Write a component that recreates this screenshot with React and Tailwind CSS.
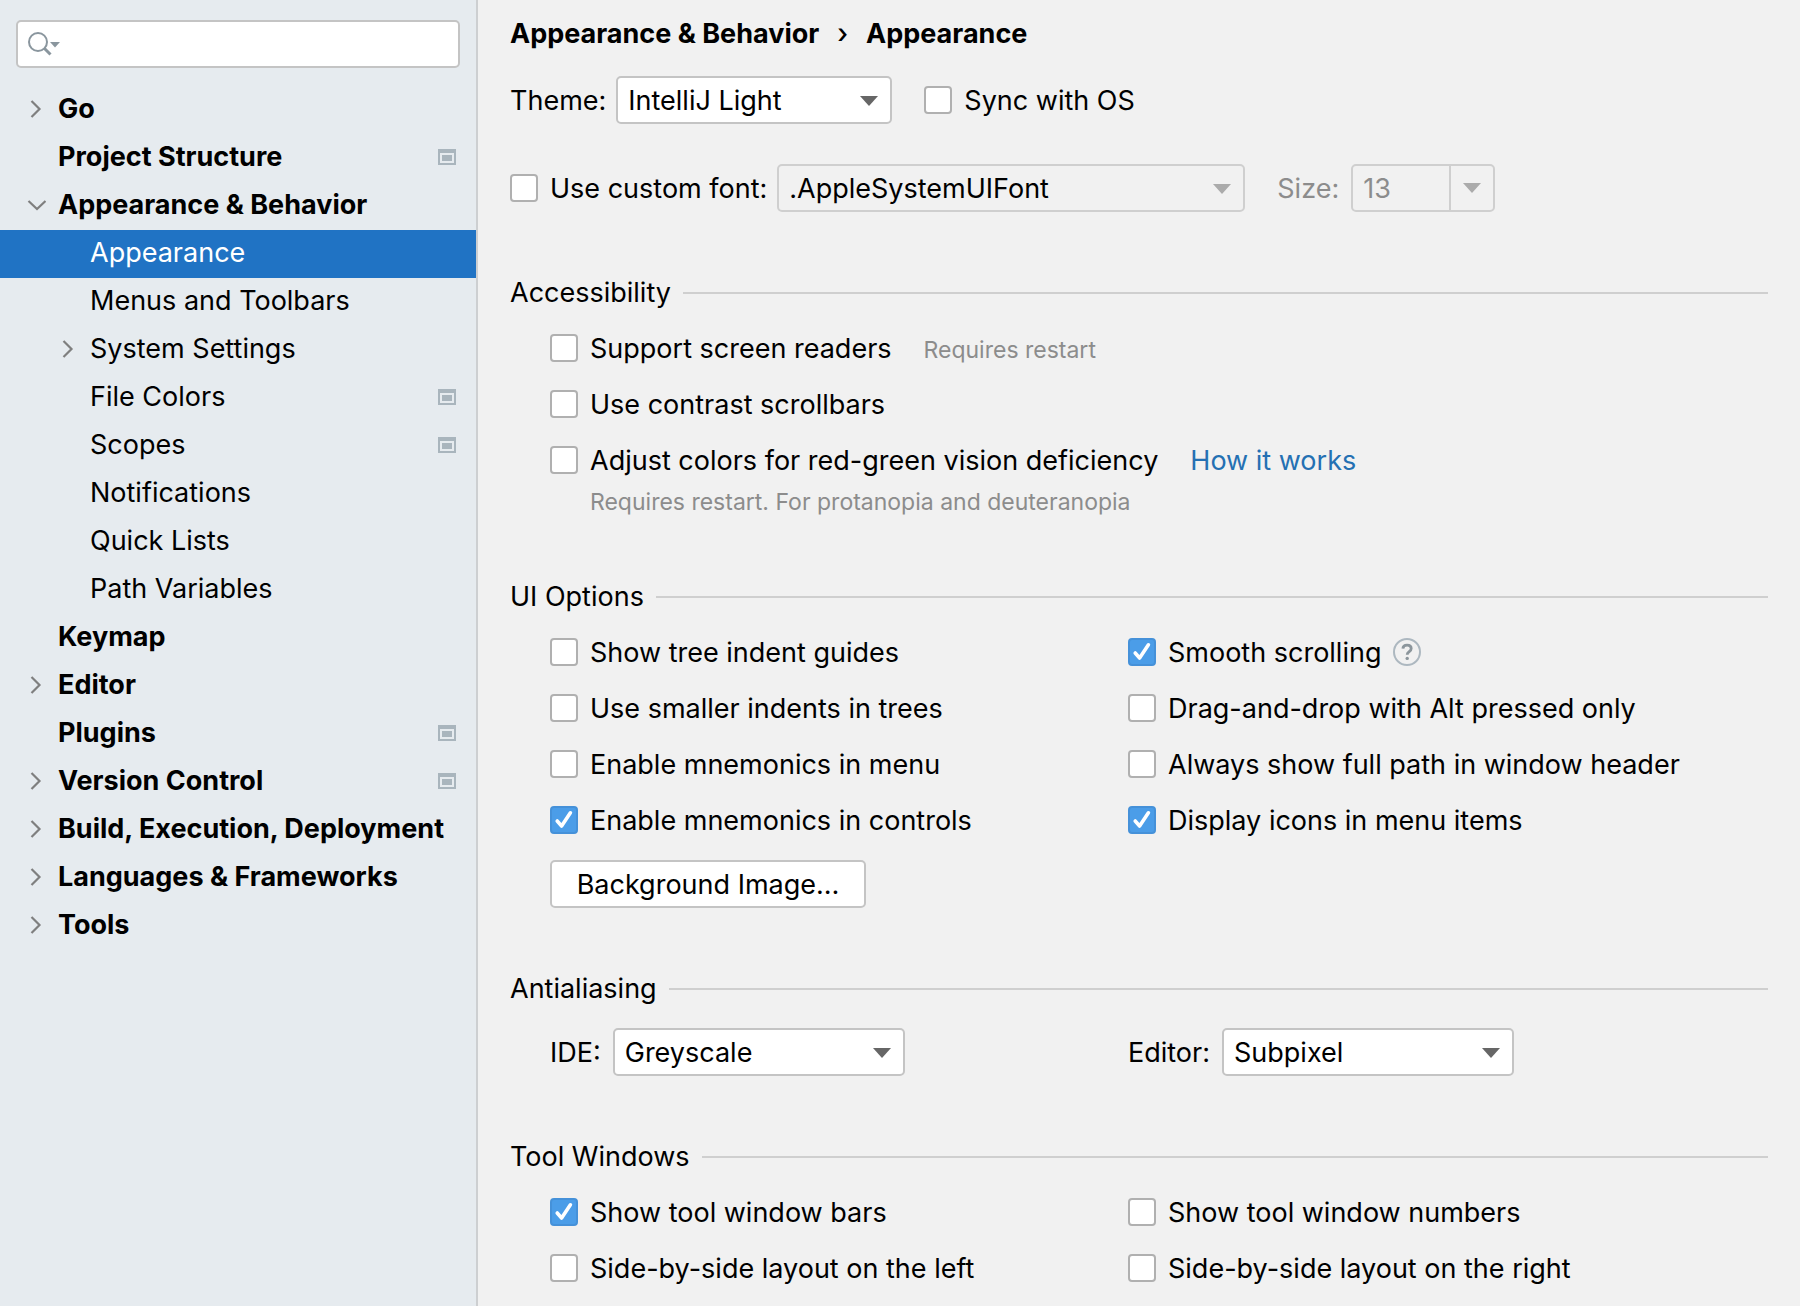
import { useState } from "react";

const TREE = [
  { label: "Go", chevron: "right" },
  { label: "Project Structure", project: true },
  { label: "Appearance & Behavior", chevron: "down" },
  { label: "Appearance", child: true },
  { label: "Menus and Toolbars", child: true },
  { label: "System Settings", child: true, chevron: "right" },
  { label: "File Colors", child: true, project: true },
  { label: "Scopes", child: true, project: true },
  { label: "Notifications", child: true },
  { label: "Quick Lists", child: true },
  { label: "Path Variables", child: true },
  { label: "Keymap" },
  { label: "Editor", chevron: "right" },
  { label: "Plugins", project: true },
  { label: "Version Control", chevron: "right", project: true },
  { label: "Build, Execution, Deployment", chevron: "right" },
  { label: "Languages & Frameworks", chevron: "right" },
  { label: "Tools", chevron: "right" },
];

function Chevron({ dir }) {
  return (
    <svg viewBox="0 0 20 20" className="w-5 h-5 shrink-0" fill="none" stroke="#7f7f7f" strokeWidth="2.2">
      {dir === "right" && <path d="M5.5 2 13.5 10 5.5 18" />}
      {dir === "down" && <path d="M2.5 6 11 14 19.5 6" />}
    </svg>
  );
}

function ProjectIcon() {
  return (
    <svg viewBox="0 0 18 16" className="w-[18px] h-4" fill="#a9b5bd">
      <path fillRule="evenodd" d="M0 0h18v16H0zM2 4v10h14V4z" />
      <path d="M4 6h10v6H4z" />
    </svg>
  );
}

function Arrow({ className }) {
  return (
    <svg viewBox="0 0 18 10" className={`w-[18px] h-2.5 ${className}`} fill="currentColor">
      <path d="M0 0h18L9 10z" />
    </svg>
  );
}

function Select({ id, options, disabled, className }) {
  return (
    <div className={`relative ${className}`}>
      <select
        id={id}
        disabled={disabled}
        className="w-full h-12 pt-0.5 pl-2.5 pr-11 appearance-none rounded-[5px] border-2 border-[#c4c4c4] bg-white
          text-black disabled:bg-transparent disabled:border-[#cfcfcf] disabled:opacity-100"
      >
        {options.map((o) => (
          <option key={o}>{o}</option>
        ))}
      </select>
      <Arrow
        className={`absolute right-3.5 top-5 pointer-events-none ${disabled ? "text-[#ababab]" : "text-[#666666]"}`}
      />
    </div>
  );
}

function Checkbox({ label, defaultChecked = false }) {
  const [checked, setChecked] = useState(defaultChecked);

  return (
    <label className="flex items-center gap-3">
      <span className="grid shrink-0">
        <input
          type="checkbox"
          checked={checked}
          onChange={(e) => setChecked(e.target.checked)}
          className="col-start-1 row-start-1 w-7 h-7 appearance-none rounded-[4px] border-2 border-[#b0b0b0] bg-white
            checked:bg-[#4b9de8] checked:border-[#4591d9]"
        />
        {checked && (
          <svg
            viewBox="0 0 28 28"
            className="col-start-1 row-start-1 w-7 h-7 pointer-events-none"
            fill="none"
            stroke="#fff"
            strokeWidth="3.6"
            strokeLinecap="round"
            strokeLinejoin="round"
          >
            <path d="M7.2 15 11.6 20 20.4 6.8" />
          </svg>
        )}
      </span>
      <span className="pt-0.5">{label}</span>
    </label>
  );
}

function Section({ title, children }) {
  return (
    <section className="mt-[66px]">
      <div className="flex items-center gap-3">
        <h2 className="leading-[30px]">{title}</h2>
        <div className="flex-1 h-0.5 bg-[#cfcfcf]" />
      </div>
      <div className="mt-3 pl-10">{children}</div>
    </section>
  );
}

function Sidebar() {
  const [selected, setSelected] = useState("Appearance");

  return (
    <aside className="w-[478px] shrink-0 bg-[#e6ebef] border-r-2 border-[#cdcfd1]">
      <div className="relative mx-4 mt-5">
        <input
          type="search"
          aria-label="Search settings"
          className="w-full h-12 pl-12 pr-3 rounded-[5px] border-2 border-[#c4c4c4] bg-white appearance-none outline-none"
        />
        <svg viewBox="0 0 34 26" className="absolute left-3 top-3 w-[34px] h-[26px] pointer-events-none" fill="none">
          <circle cx="10" cy="10" r="9" stroke="#8a969e" strokeWidth="2" />
          <path d="M16.5 16.5 22.5 22.5" stroke="#8a969e" strokeWidth="3" />
          <path d="M22 10h10l-5 5.5z" fill="#8a969e" />
        </svg>
      </div>
      <nav className="mt-[18px]">
        {TREE.map((item) => (
          <button
            key={item.label}
            onClick={() => setSelected(item.label)}
            className={`w-full h-12 flex items-center gap-3 pb-0.5 pr-5 text-left whitespace-nowrap
              ${item.child ? "pl-[58px]" : "pl-[26px] font-bold"}
              ${selected === item.label ? "bg-[#2073c4] text-white" : ""}`}
          >
            <Chevron dir={item.chevron} />
            <span className="flex-1">{item.label}</span>
            {item.project && <ProjectIcon />}
          </button>
        ))}
      </nav>
    </aside>
  );
}

export default function App() {
  return (
    <div className="min-h-screen flex bg-[#f1f1f1] text-black text-[27px] leading-8 font-[Inter,sans-serif]">
      <Sidebar />

      <main className="flex-1 px-8 pt-4 pb-2.5">
        <h1 className="flex items-center gap-[18px] pt-0.5 font-bold">
          <span>Appearance &amp; Behavior</span>
          <span className="font-medium">›</span>
          <span>Appearance</span>
        </h1>

        {/* Theme */}
        <div className="mt-[26px] flex items-center">
          <label htmlFor="theme" className="mr-2.5 pt-0.5">Theme:</label>
          <Select id="theme" options={["IntelliJ Light", "Darcula", "High Contrast"]} className="w-[276px] mr-8" />
          <Checkbox label="Sync with OS" />
        </div>

        {/* Font */}
        <div className="mt-10 flex items-center">
          <Checkbox label="Use custom font:" />
          <Select id="font" disabled options={[".AppleSystemUIFont"]} className="w-[468px] ml-2.5 mr-8" />
          <label htmlFor="size" className="mr-3 pt-0.5 text-[#8c8c8c]">Size:</label>
          <div className="flex w-36 h-12 rounded-[5px] border-2 border-[#cfcfcf] text-[#8c8c8c]">
            <input id="size" disabled defaultValue="13" className="flex-1 min-w-0 pt-0.5 pl-2.5" />
            <button
              disabled
              aria-label="Font sizes"
              className="w-11 border-l-2 border-[#cfcfcf] flex items-center justify-center"
            >
              <Arrow className="text-[#ababab]" />
            </button>
          </div>
        </div>

        <Section title="Accessibility">
          <div className="h-14 flex items-center gap-8">
            <Checkbox label="Support screen readers" />
            <span className="pt-1 text-[23px] text-[#8c8c8c]">Requires restart</span>
          </div>
          <div className="h-14 flex items-center">
            <Checkbox label="Use contrast scrollbars" />
          </div>
          <div className="h-14 flex items-center gap-8">
            <Checkbox label="Adjust colors for red-green vision deficiency" />
            <a href="#how" className="pt-0.5 text-[#2470b3]">How it works</a>
          </div>
          <p className="pl-10 text-[23px] leading-7 text-[#8c8c8c]">
            Requires restart. For protanopia and deuteranopia
          </p>
        </Section>

        <Section title="UI Options">
          <div className="grid grid-cols-[578px_1fr] auto-rows-[56px] items-center">
            <Checkbox label="Show tree indent guides" />
            <div className="flex items-center gap-3">
              <Checkbox label="Smooth scrolling" defaultChecked />
              <svg viewBox="0 0 28 28" className="w-7 h-7" fill="none">
                <circle cx="14" cy="14" r="13" stroke="#adb8c0" strokeWidth="2" />
                <path
                  d="M9.9 10.6c.1-2.1 1.7-3.4 4.2-3.4s4.1 1.3 4.1 3.3c0 1.6-.8 2.4-2.1 3.2-1.4.9-1.9 1.5-1.9 3.1"
                  stroke="#8c969c"
                  strokeWidth="2.8"
                />
                <circle cx="14.2" cy="20.4" r="1.7" fill="#8c969c" />
              </svg>
            </div>
            <Checkbox label="Use smaller indents in trees" />
            <Checkbox label="Drag-and-drop with Alt pressed only" />
            <Checkbox label="Enable mnemonics in menu" />
            <Checkbox label="Always show full path in window header" />
            <Checkbox label="Enable mnemonics in controls" defaultChecked />
            <Checkbox label="Display icons in menu items" defaultChecked />
          </div>
          <button className="mt-3 h-12 w-[316px] pt-0.5 rounded-[5px] border-2 border-[#c4c4c4] bg-white block">
            Background Image…
          </button>
        </Section>

        <Section title="Antialiasing">
          <div className="pt-3 grid grid-cols-[578px_1fr]">
            <div className="flex items-center gap-3">
              <label htmlFor="aa-ide" className="pt-0.5">IDE:</label>
              <Select id="aa-ide" options={["Greyscale", "Subpixel", "No antialiasing"]} className="w-[292px]" />
            </div>
            <div className="flex items-center gap-3">
              <label htmlFor="aa-editor" className="pt-0.5">Editor:</label>
              <Select id="aa-editor" options={["Subpixel", "Greyscale", "No antialiasing"]} className="w-[292px]" />
            </div>
          </div>
        </Section>

        <Section title="Tool Windows">
          <div className="grid grid-cols-[578px_1fr] auto-rows-[56px] items-center">
            <Checkbox label="Show tool window bars" defaultChecked />
            <Checkbox label="Show tool window numbers" />
            <Checkbox label="Side-by-side layout on the left" />
            <Checkbox label="Side-by-side layout on the right" />
          </div>
        </Section>
      </main>
    </div>
  );
}
